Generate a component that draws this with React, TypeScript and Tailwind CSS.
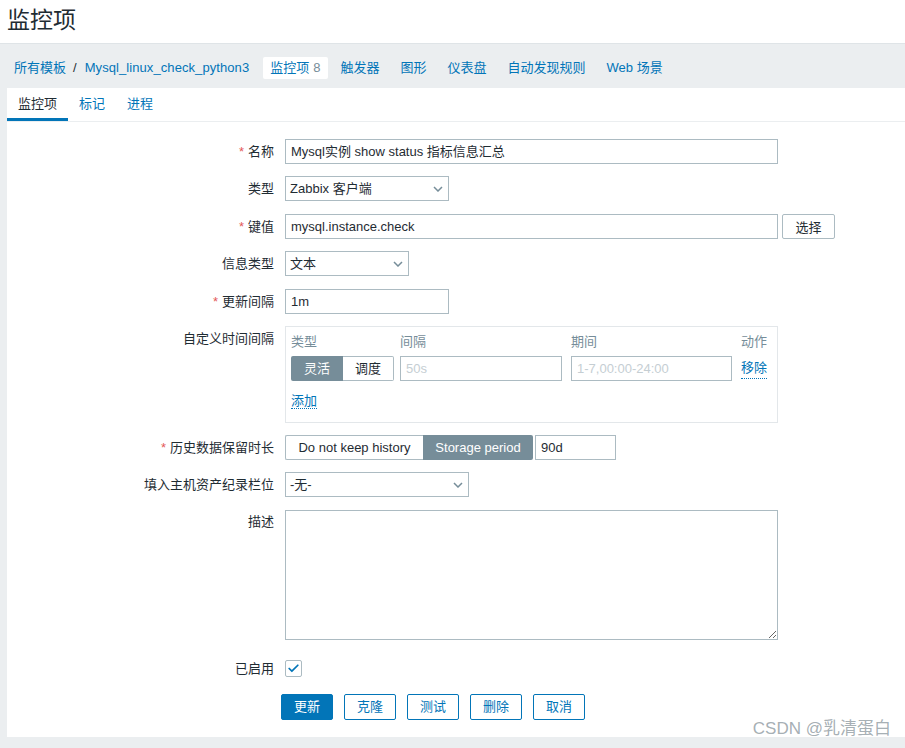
import { Check } from 'lucide-react'

const font = "font-['Liberation_Sans','Noto_Sans_CJK_SC',sans-serif]"

const navItems = [
  { label: '触发器', ml: 'ml-[13px]' },
  { label: '图形', ml: 'ml-[21px]' },
  { label: '仪表盘', ml: 'ml-[21px]' },
  { label: '自动发现规则', ml: 'ml-[21px]' },
  { label: 'Web 场景', ml: 'ml-[21px]' },
]

function Label({ text, required, className = '' }: { text: string; required?: boolean; className?: string }) {
  return (
    <div className={`w-[267px] shrink-0 text-right pr-0 ${className}`}>
      {required && <span className="text-[#e45959] mr-[4px]">*</span>}
      {text}
    </div>
  )
}

function Select({ value, width }: { value: string; width: string }) {
  return (
    <div className={`${width} h-[25px] border border-[#acbbc2] bg-white flex items-center pl-[4px] pr-[5px] justify-between`}>
      <span>{value}</span>
      <svg width="10" height="6" viewBox="0 0 10 6" className="text-[#768d99]">
        <polyline points="1,1 5,5 9,1" fill="none" stroke="currentColor" strokeWidth="1.5" />
      </svg>
    </div>
  )
}

function Btn({ text, primary }: { text: string; primary?: boolean }) {
  return (
    <button
      type="button"
      className={`h-[26px] w-[52px] rounded-[2px] border border-[#0275b8] text-[13px] ${
        primary ? 'bg-[#0275b8] text-white' : 'bg-white text-[#0275b8]'
      }`}
    >
      {text}
    </button>
  )
}

export default function App() {
  return (
    <div className={`relative w-[905px] h-[748px] overflow-hidden bg-[#ebeef0] text-[13px] text-[#1f2c33] ${font}`}>
      <header className="h-[44px] bg-white border-b border-[#dfe4e7] pl-[7px] flex items-center">
        <h1 className="text-[23px] leading-none pb-[3px]">监控项</h1>
      </header>

      <nav className="h-[44px] flex items-center pt-[3px] pl-[14px] text-[#0275b8]">
        <span>所有模板</span>
        <span className="mx-[7px] text-[#1f2c33]">/</span>
        <span className="ml-px tracking-[0.08px]">Mysql_linux_check_python3</span>
        <span className="ml-[14px] h-[22px] px-[7px] bg-white rounded-[2px] flex items-center">
          监控项<span className="ml-[4px] text-[#768d99]">8</span>
        </span>
        {navItems.map((n) => (
          <span key={n.label} className={n.ml}>
            {n.label}
          </span>
        ))}
      </nav>

      <main className="ml-[7px] h-[649px] bg-white">
        <div className="h-[34px] flex border-b border-[#ebeef0]">
          <div className="px-[11px] h-[33px] leading-[31px] border-b-[3px] border-[#0275b8]">监控项</div>
          <div className="px-[11px] leading-[31px] text-[#0275b8]">标记</div>
          <div className="px-[11px] leading-[31px] text-[#0275b8]">进程</div>
        </div>

        <div className="pt-[17px] flex flex-col">
          <div className="flex gap-[11px] leading-[25px]">
            <Label text="名称" required />
            <div className="w-[493px] h-[25px] border border-[#acbbc2] px-[5px] leading-[23px]">
              Mysql实例 show status 指标信息汇总
            </div>
          </div>

          <div className="flex gap-[11px] leading-[25px] mt-[12px]">
            <Label text="类型" />
            <Select value="Zabbix 客户端" width="w-[164px]" />
          </div>

          <div className="flex gap-[11px] leading-[25px] mt-[13px]">
            <Label text="键值" required />
            <div className="w-[493px] h-[25px] border border-[#acbbc2] px-[5px] leading-[23px]">
              mysql.instance.check
            </div>
            <button
              type="button"
              className="-ml-[7px] h-[25px] w-[53px] border border-[#acbbc2] rounded-[2px] bg-white text-[13px]"
            >
              选择
            </button>
          </div>

          <div className="flex gap-[11px] leading-[25px] mt-[12px]">
            <Label text="信息类型" />
            <Select value="文本" width="w-[124px]" />
          </div>

          <div className="flex gap-[11px] leading-[25px] mt-[13px]">
            <Label text="更新间隔" required />
            <div className="w-[164px] h-[25px] border border-[#acbbc2] px-[5px] leading-[23px]">1m</div>
          </div>

          <div className="flex gap-[11px] leading-[25px] mt-[12px]">
            <Label text="自定义时间间隔" />
            <div className="w-[493px] h-[97px] border border-[#e3e7ea] px-[5px] pt-[5px]">
              <div className="grid grid-cols-[109px_171px_170px_auto] leading-[20px] text-[#768d99]">
                <span>类型</span>
                <span>间隔</span>
                <span>期间</span>
                <span>动作</span>
              </div>
              <div className="grid grid-cols-[109px_171px_170px_auto] mt-[4px] items-center">
                <div className="flex h-[25px] w-[103px]">
                  <span className="w-[52px] bg-[#768d99] text-white text-center leading-[25px] rounded-l-[2px]">灵活</span>
                  <span className="w-[51px] border border-l-0 border-[#acbbc2] text-center leading-[23px] rounded-r-[2px]">调度</span>
                </div>
                <div className="w-[162px] h-[25px] border border-[#acbbc2] px-[5px] leading-[23px] text-[#c5ced3]">50s</div>
                <div className="w-[161px] h-[25px] border border-[#acbbc2] px-[5px] leading-[23px] text-[#c5ced3]">
                  1-7,00:00-24:00
                </div>
                <span className="text-[#0275b8] leading-[20px] border-b border-dotted border-[#0275b8] w-max">移除</span>
              </div>
              <div className="mt-[10px] leading-[19px]">
                <span className="text-[#0275b8] border-b border-dotted border-[#0275b8]">添加</span>
              </div>
            </div>
          </div>

          <div className="flex gap-[11px] leading-[25px] mt-[12px]">
            <Label text="历史数据保留时长" required />
            <div className="flex h-[25px]">
              <span className="w-[138px] border border-r-0 border-[#acbbc2] text-center leading-[23px] rounded-l-[2px]">
                Do not keep history
              </span>
              <span className="w-[110px] bg-[#768d99] text-white text-center leading-[25px] rounded-r-[2px]">
                Storage period
              </span>
              <div className="ml-[2px] w-[81px] h-[25px] border border-[#acbbc2] px-[5px] leading-[23px]">90d</div>
            </div>
          </div>

          <div className="flex gap-[11px] leading-[25px] mt-[12px]">
            <Label text="填入主机资产纪录栏位" />
            <Select value="-无-" width="w-[184px]" />
          </div>

          <div className="flex gap-[11px] mt-[13px]">
            <Label text="描述" className="leading-[23px]" />
            <textarea className="w-[493px] h-[130px] border border-[#acbbc2] outline-none" />
          </div>

          <div className="flex gap-[11px] mt-[20px] leading-[17px]">
            <Label text="已启用" />
            <div className="w-[17px] h-[17px] border border-[#acbbc2] rounded-[2px] flex items-center justify-center">
              <Check size={13} strokeWidth={3.2} className="text-[#0275b8]" />
            </div>
          </div>

          <div className="flex gap-[11px] mt-[17px] pl-[274px]">
            <Btn text="更新" primary />
            <Btn text="克隆" />
            <Btn text="测试" />
            <Btn text="删除" />
            <Btn text="取消" />
          </div>
        </div>
      </main>

      <div className="absolute right-[14px] top-[719px] text-[17px] text-[#9ba5ab]/90 leading-[20px]">CSDN @乳清蛋白</div>
    </div>
  )
}
